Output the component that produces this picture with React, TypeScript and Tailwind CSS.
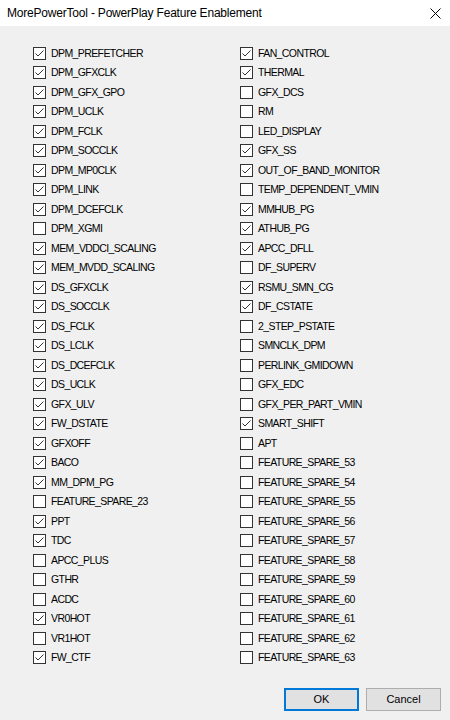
import React from 'react';

const left: [string, boolean][] = [
  ['DPM_PREFETCHER', true],
  ['DPM_GFXCLK', true],
  ['DPM_GFX_GPO', true],
  ['DPM_UCLK', true],
  ['DPM_FCLK', true],
  ['DPM_SOCCLK', true],
  ['DPM_MP0CLK', true],
  ['DPM_LINK', true],
  ['DPM_DCEFCLK', true],
  ['DPM_XGMI', false],
  ['MEM_VDDCI_SCALING', true],
  ['MEM_MVDD_SCALING', true],
  ['DS_GFXCLK', true],
  ['DS_SOCCLK', true],
  ['DS_FCLK', true],
  ['DS_LCLK', true],
  ['DS_DCEFCLK', true],
  ['DS_UCLK', true],
  ['GFX_ULV', true],
  ['FW_DSTATE', true],
  ['GFXOFF', true],
  ['BACO', true],
  ['MM_DPM_PG', true],
  ['FEATURE_SPARE_23', false],
  ['PPT', true],
  ['TDC', true],
  ['APCC_PLUS', false],
  ['GTHR', false],
  ['ACDC', false],
  ['VR0HOT', true],
  ['VR1HOT', false],
  ['FW_CTF', true],
];

const right: [string, boolean][] = [
  ['FAN_CONTROL', true],
  ['THERMAL', true],
  ['GFX_DCS', false],
  ['RM', false],
  ['LED_DISPLAY', false],
  ['GFX_SS', true],
  ['OUT_OF_BAND_MONITOR', true],
  ['TEMP_DEPENDENT_VMIN', false],
  ['MMHUB_PG', true],
  ['ATHUB_PG', true],
  ['APCC_DFLL', true],
  ['DF_SUPERV', false],
  ['RSMU_SMN_CG', true],
  ['DF_CSTATE', true],
  ['2_STEP_PSTATE', false],
  ['SMNCLK_DPM', false],
  ['PERLINK_GMIDOWN', false],
  ['GFX_EDC', false],
  ['GFX_PER_PART_VMIN', false],
  ['SMART_SHIFT', true],
  ['APT', false],
  ...Array.from({ length: 11 }, (_, i) => [`FEATURE_SPARE_${53 + i}`, false] as [string, boolean]),
];

function Check({ label, checked }: { label: string; checked: boolean }) {
  return (
    <div className="flex h-[19.5px] items-center">
      <span className="flex h-[13px] w-[13px] shrink-0 items-center justify-center border border-[#333333] bg-white">
        {checked ? (
          <svg width="11" height="11" viewBox="0 0 11 11">
            <path d="M1.5 5.5 L4 8 L9.5 2.5" fill="none" stroke="#333333" strokeWidth="1" />
          </svg>
        ) : null}
      </span>
      <span className="ml-[5px] pt-px text-[10.5px] tracking-[-0.6px] text-black">{label}</span>
    </div>
  );
}

export default function App() {
  return (
    <div className="flex h-[720px] w-[450px] flex-col bg-[#f0f0f0] font-['Liberation_Sans',sans-serif]">
      <div className="flex h-[26px] items-center justify-between bg-white pl-[7px] pr-[9px]">
        <span className="text-[12px] tracking-[-0.2px] text-black">MorePowerTool - PowerPlay Feature Enablement</span>
        <svg width="11" height="11" viewBox="0 0 11 11">
          <path d="M0.5 0.5 L10.5 10.5 M10.5 0.5 L0.5 10.5" stroke="#000" strokeWidth="1" />
        </svg>
      </div>
      <div className="flex pl-[33px] pt-[17.5px]">
        <div className="w-[207px]">
          {left.map(([l, c]) => (
            <Check key={l} label={l} checked={c} />
          ))}
        </div>
        <div>
          {right.map(([l, c]) => (
            <Check key={l} label={l} checked={c} />
          ))}
        </div>
      </div>
      <div className="mt-[20.5px] flex justify-end gap-[7px] pr-[9px]">
        <button className="h-[23px] w-[75px] border-2 border-[#0078d7] bg-[#e1e1e1] text-[11px] text-black">
          OK
        </button>
        <button className="h-[23px] w-[75px] border border-[#adadad] bg-[#e1e1e1] text-[11px] text-black">
          Cancel
        </button>
      </div>
    </div>
  );
}
